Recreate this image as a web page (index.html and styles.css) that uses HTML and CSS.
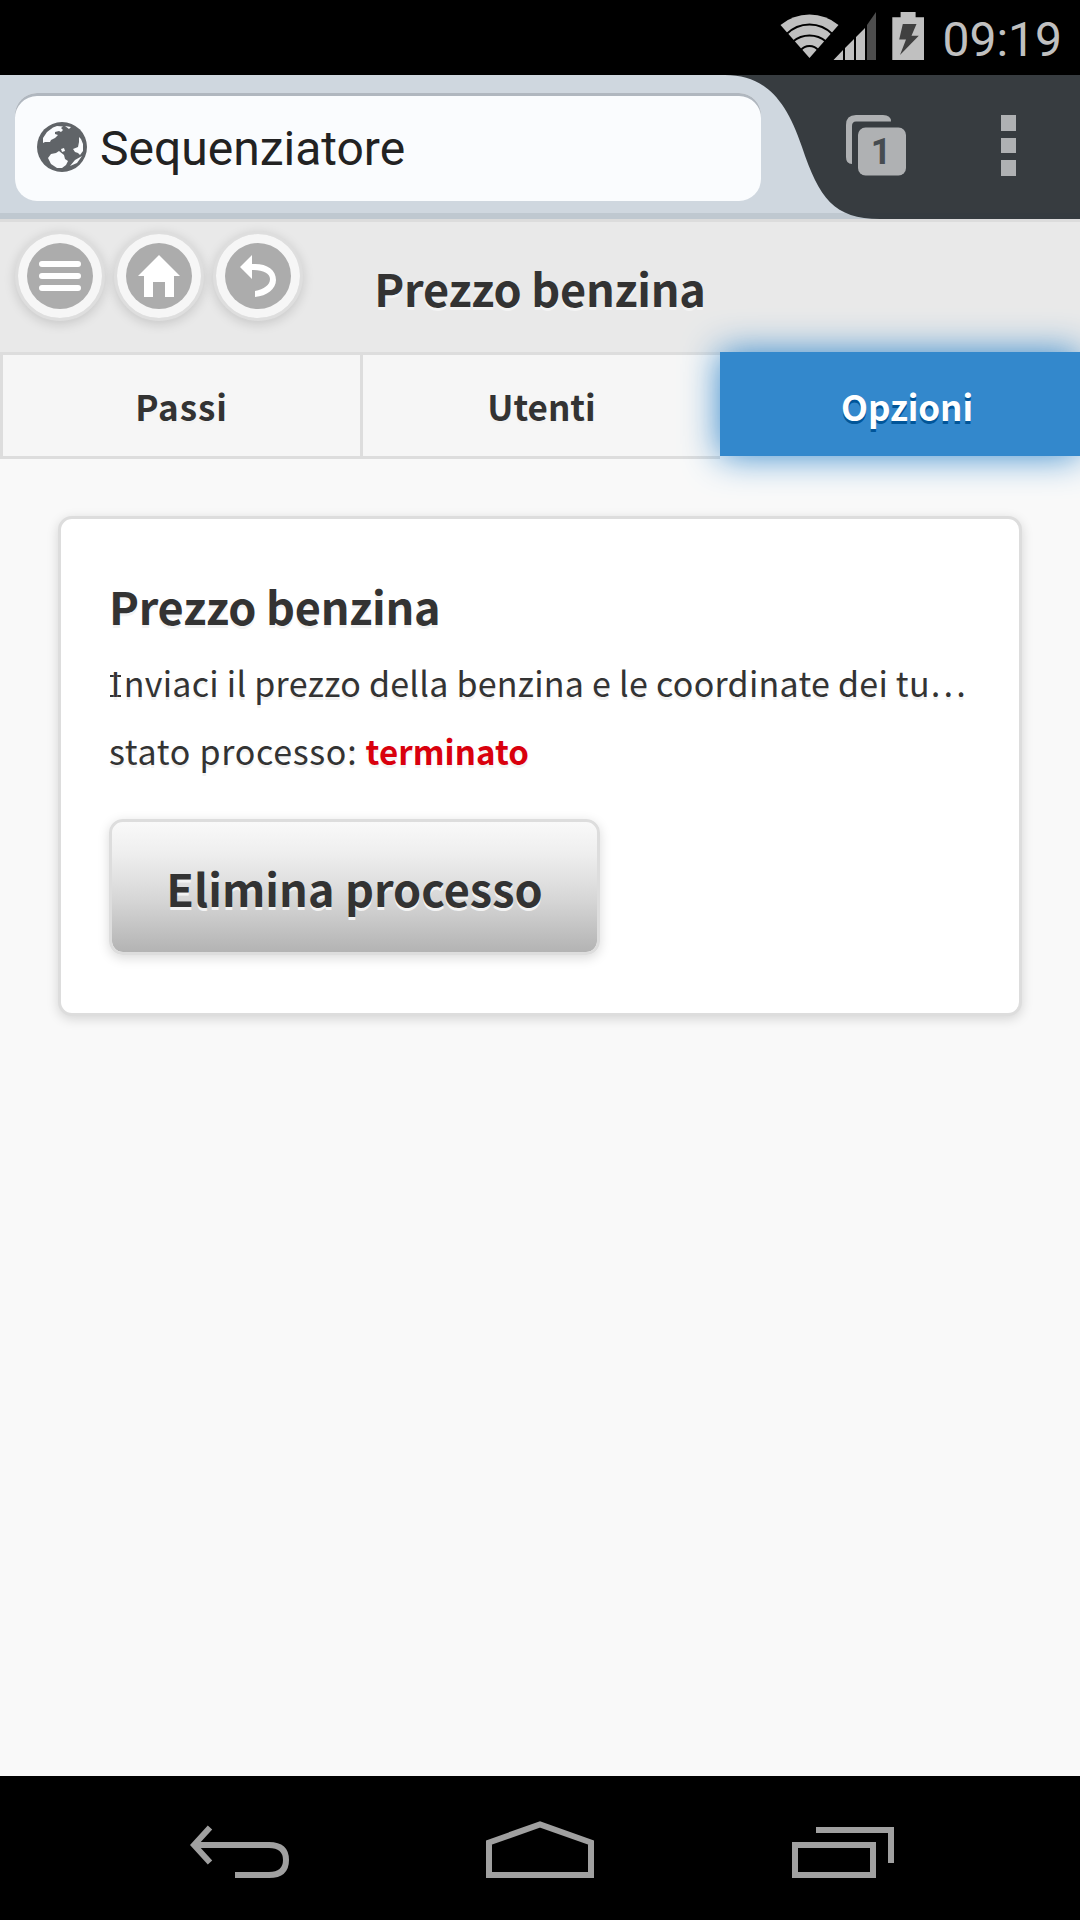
FILE: index.html
```html
<!DOCTYPE html>
<html lang="it">
<head>
<meta charset="utf-8">
<title>Sequenziatore</title>
<link rel="stylesheet" href="styles.css">
</head>
<body>
<div class="screen">
  <div class="status-bar">
    <svg class="status-icons" width="150" height="50" viewBox="778 11 150 50">
      <g fill="#c0c0c0">
        <path d="M809.500 58L780.500 25Q793 14.500 809.500 14.500T838.500 25Z"/>
        <path d="M833.500 60L843 50V60ZM845 60V48L854 39V60ZM856 60V37L865 28V60Z"/>
        <path d="M892.300 17.300H900.600V12H915.600V17.300H924V60H892.300Z"/>
      </g>
      <path d="M867 60V25L876 12V60Z" fill="#4d4d4d"/>
      <g fill="none" stroke="#000" stroke-width="2">
        <path d="M786 34.500Q796 24.500 809.500 24.500T833 34.500"/>
        <path d="M793 41.500Q800 35.500 809.500 35.500T826 41.500"/>
        <path d="M800.500 50.500Q804 46 809.500 46T818.500 50.500"/>
      </g>
      <path d="M902.800 24H916.500L911.500 35.800H918.800L900 55L906 39.500H899.200Z" fill="#404040"/>
    </svg>
    <span class="clock">09:19</span>
  </div>

  <div class="toolbar">
    <svg class="curve" width="360" height="144" viewBox="720 75 360 144">
      <path d="M725 75C762 75 785 96 802 147S834 219 880 219H1080V75Z" fill="#373c40"/>
    </svg>
    <div class="omnibox">
      <svg width="50" height="50" viewBox="0 0 50 50">
        <circle cx="25" cy="25" r="25" fill="#606468"/>
        <path d="M6 21L6 16L10 10L16 5.500L20 4L26 4.500L24 6L26 8L24 10L22 9L18 10L18 12L21 13L18 16L14 18L13 20L8 20Z" fill="#fafcfe"/>
        <path d="M11 36L14 32L19 31L22 29L27 33L28 37L31 39L29 43L25 46H20L14 42Z" fill="#fafcfe"/>
        <path d="M42 15L44 17L46 22V29L43 33L41 31L38 30L36 27L41 25L42 20ZM28 4L34 5L32 7ZM45 34L40 41L33 44L38 38Z" fill="#fafcfe"/>
        <path d="M24 27L27 26L28 29L25 30Z" fill="#fafcfe"/>
      </svg>
      <span class="page-name">Sequenziatore</span>
    </div>
    <div class="tab-switch">
      <svg width="61" height="61" viewBox="846 115 61 61">
        <path d="M846 157V125Q846 115 856 115H883Q891 115 891 121.500H856Q852 121.500 852 126V164Q846 164 846 157Z" fill="#afb1b3"/>
        <rect x="858" y="127.500" width="48" height="48" rx="7.500" fill="#afb1b3"/>
      </svg>
      <span class="tab-count">1</span>
    </div>
    <div class="overflow"><i></i><i></i><i></i></div>
  </div>

  <header class="header">
    <nav class="round-buttons">
      <a class="round"><svg width="66" height="66" viewBox="0 0 66 66"><path d="M15 21H51M15 33H51M15 45H51" stroke="#fff" stroke-width="6" stroke-linecap="round"/></svg></a>
      <a class="round"><svg width="66" height="66" viewBox="0 0 66 66"><path d="M33 12L54 33H48V54H39V39H27V54H18V33H12Z" fill="#fff"/></svg></a>
      <a class="round"><svg width="66" height="66" viewBox="0 0 66 66"><path d="M15 24L27 12V21C41 20 51 26 51 37C51 46 42 53 30 54V48C39 46 45 42 45 36C45 30 37 27 27 27V36Z" fill="#fff"/></svg></a>
    </nav>
    <h1 class="title">Prezzo benzina</h1>
  </header>

  <nav class="tabs">
    <a class="tab first">Passi</a>
    <a class="tab">Utenti</a>
    <a class="tab active">Opzioni</a>
  </nav>

  <main class="content">
    <section class="card">
      <h2 class="card-title">Prezzo benzina</h2>
      <p class="line desc">Inviaci il prezzo della benzina e le coordinate dei tu…</p>
      <p class="line state">stato processo: <strong>terminato</strong></p>
      <button class="button">Elimina processo</button>
    </section>
  </main>

  <footer class="nav-bar">
    <svg width="100" height="60" viewBox="190 1820 100 60"><path d="M210 1827.500L194 1845L210 1862.500"/><path d="M194 1845H269Q286 1845 286 1860T269 1875H235"/></svg>
    <svg width="108" height="60" viewBox="486 1820 108 60"><path d="M489 1875V1842.500L540 1824.500L591 1842.500V1875Z"/></svg>
    <svg width="104" height="60" viewBox="791 1820 104 60"><path d="M795 1845H873V1875H795ZM816 1830H891V1863"/></svg>
  </footer>
</div>
</body>
</html>
```
FILE: styles.css
```css
* { box-sizing: border-box; }
body { margin: 0; background: #f9f9f9; color: #333; font-family: "Noto Sans CJK SC", "Noto Sans", sans-serif; }
svg { display: block; }
h1, h2, p { margin: 0; }

.screen { width: 1080px; height: 1920px; display: flex; flex-direction: column; overflow: hidden; }

.status-bar { height: 75px; flex: none; background: #000; display: flex; justify-content: flex-end; padding: 11px 18px 0 0; gap: 14px; }
.clock { font: 48px/57px Roboto, sans-serif; color: #c0c0c0; }

.toolbar { height: 144px; flex: none; position: relative; background: #cfd7df; display: flex; padding: 18px 64px 0 15px; }
.toolbar::after { content: ""; position: absolute; left: 0; right: 0; bottom: 0; height: 6px; background: rgba(30, 50, 70, .09); }
.curve { position: absolute; right: 0; top: 0; }
.omnibox { position: relative; width: 746px; height: 108px; border-radius: 22px; background: #fafcfe; box-shadow: inset 0 3px 0 #b0b7bf; display: flex; align-items: center; padding: 0 0 0 22px; gap: 13px; }
.page-name { font: 48px/60px Roboto, sans-serif; color: #222; padding-top: 3px; }
.tab-switch { position: relative; margin: 22px 0 0 85px; width: 61px; height: 61px; }
.tab-count { position: absolute; left: 12px; top: 13px; width: 46px; text-align: center; font: 700 36px/48px Roboto, sans-serif; color: #464c51; }
.overflow { position: relative; margin: 22px 0 0 auto; display: flex; flex-direction: column; gap: 7px; }
.overflow i { width: 15.500px; height: 15.500px; background: #afb1b3; }

.header { height: 133px; flex: none; background: #e9e9e9; border-top: 3px solid #dcdcdc; display: grid; grid-template-columns: 303px 474px 303px; }
.round-buttons { display: flex; gap: 9px; padding: 9px 0 0 15px; }
.round { width: 90px; height: 90px; border-radius: 50%; border: 3px solid #dedede; background: #f6f6f6; background-clip: padding-box; box-shadow: 0 3px 12px rgba(0, 0, 0, .15); padding: 9px; }
.round svg { border-radius: 50%; background: #acacac; }
.title { font-size: 45px; line-height: 66px; letter-spacing: -.25px; padding-top: 33px; text-align: center; text-shadow: 0 3px 0 #f3f3f3; }

.tabs { height: 107px; flex: none; display: grid; grid-template: 107px / repeat(3, 360px); }
.tab { font-size: 35px; font-weight: 700; line-height: 102px; text-align: center; background: #f6f6f6; border: solid #ddd; border-width: 3px 0 3px 3px; text-shadow: 0 3px 0 #f3f3f3; height: 107px; }
.first { letter-spacing: .9px; }
.active { position: relative; height: 104px; border: 0; padding: 3px 0 0 14px; background: #38c; color: #fff; text-shadow: 0 3px 0 #059; box-shadow: 0 0 36px #38c; letter-spacing: -.1px; }

.content { flex: 1; padding: 57px 58px 0; }
.card { height: 500px; background: #fff; border: 3px solid #ddd; border-radius: 14px; box-shadow: 0 3px 12px rgba(0, 0, 0, .15); padding: 57px 0 0 48px; }
.card-title { font-size: 45px; line-height: 60px; letter-spacing: -.25px; margin-bottom: 13px; text-shadow: 0 3px 0 #f3f3f3; }
.line { font-size: 34px; line-height: 68px; white-space: nowrap; text-shadow: 0 3px 0 #f3f3f3; }
.desc { letter-spacing: .26px; }
/* capital I with slab serifs */
.desc::first-letter {
  padding: 0 3px 0 1.500px;
  background: linear-gradient(#333, #333) 1px 17px / 11px 2px no-repeat, linear-gradient(#333, #333) 1px 37px / 11px 2px no-repeat;
}
.state { letter-spacing: .68px; }
.state strong { color: #d9000d; font-size: 33px; letter-spacing: .1px; }
.button { display: block; width: 491px; height: 136px; margin-top: 34px; padding: 2px 0 0; border: 3px solid #ddd; border-radius: 14px; background: linear-gradient(#f9f9f9, #eee 25%, #d6d6d6 60%, #b3b3b3) padding-box; box-shadow: 0 3px 12px rgba(0, 0, 0, .15); color: #333; font: 700 45px/66px "Noto Sans CJK SC", "Noto Sans", sans-serif; letter-spacing: .05px; text-shadow: 0 3px 0 #f3f3f3; }

.nav-bar { height: 144px; flex: none; background: #000; display: grid; grid-template-columns: 100px 108px 104px; column-gap: 196px; padding: 44px 0 0 190px; }
.nav-bar svg:nth-child(2) { margin-left: 0; }
.nav-bar svg:nth-child(3) { margin-left: 1px; }
.nav-bar path { fill: none; stroke: #a0a0a0; stroke-width: 6; }
```
